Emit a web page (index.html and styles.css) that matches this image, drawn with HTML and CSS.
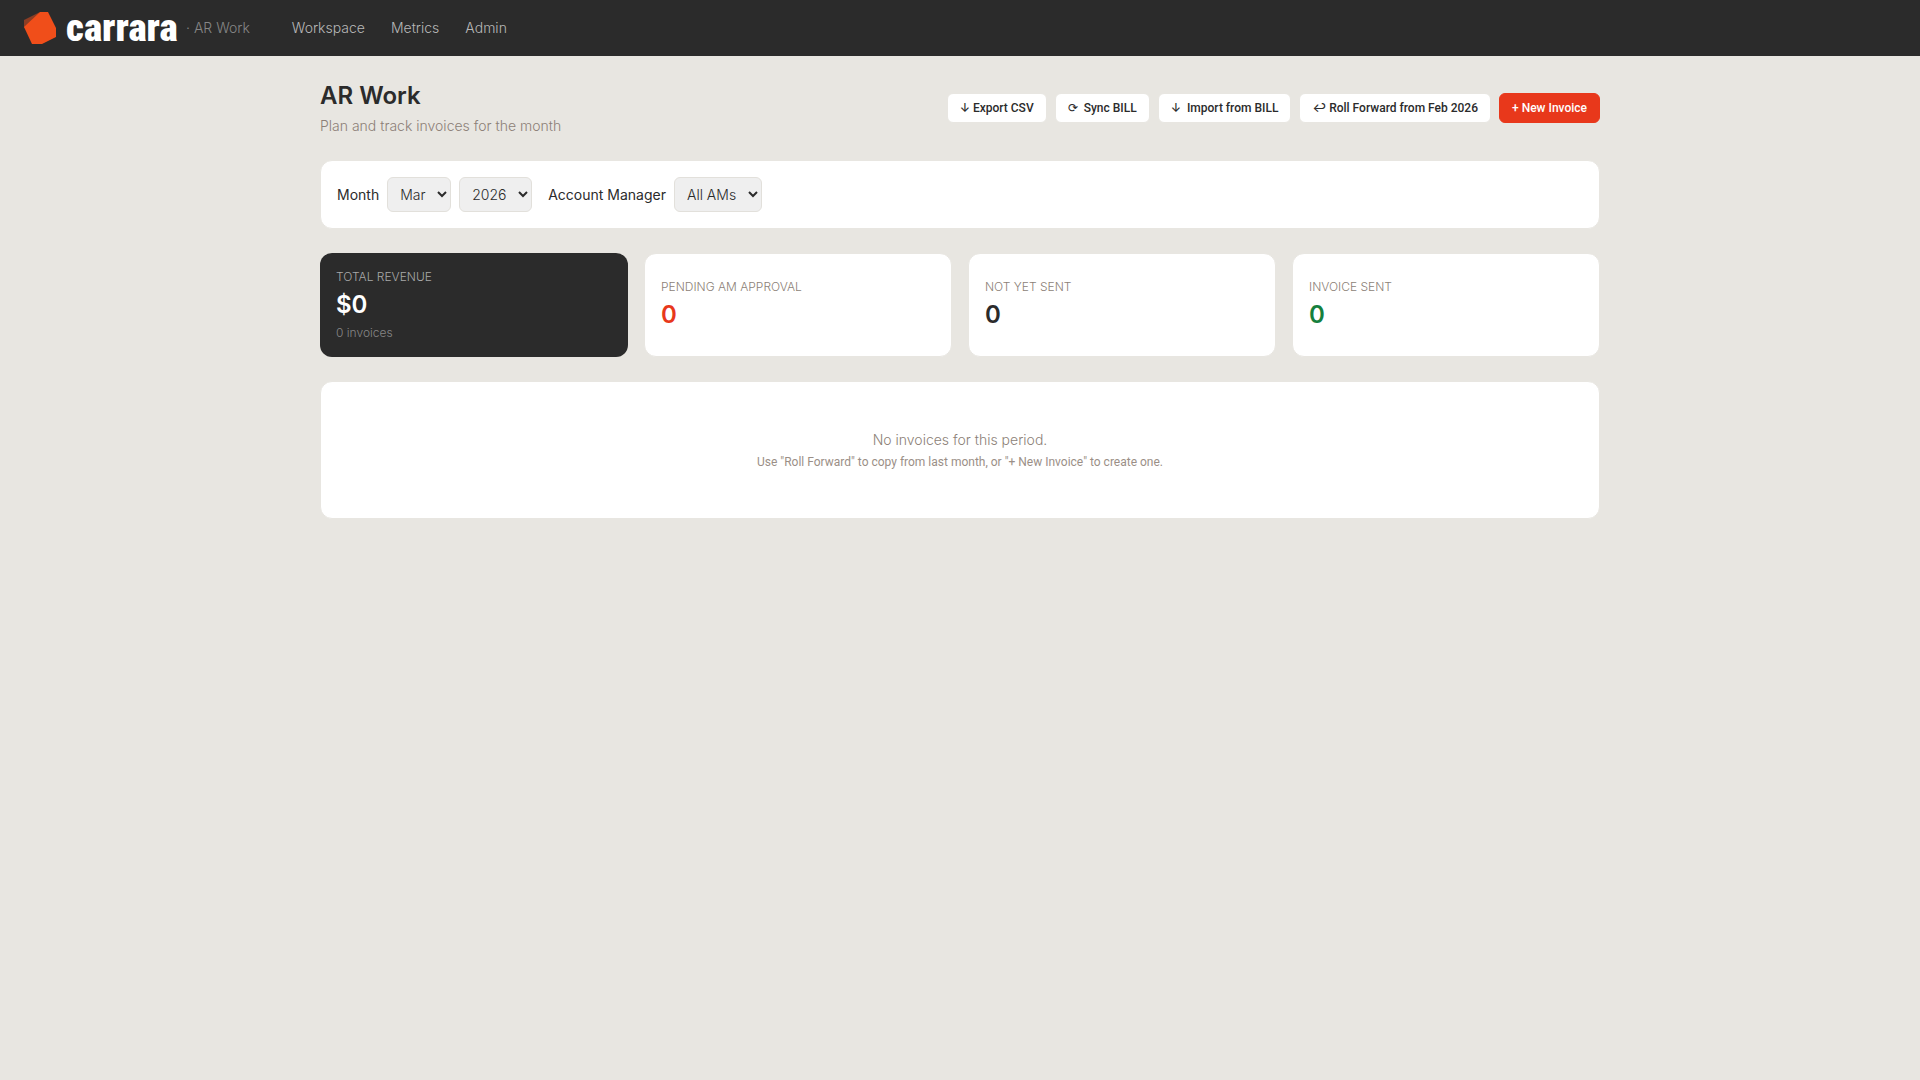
FILE: index.html
```html
<!DOCTYPE html>
<html lang="en">
<head>
<meta charset="utf-8">
<meta name="viewport" content="width=device-width, initial-scale=1">
<title>AR Work</title>
<link rel="stylesheet" href="styles.css">
</head>
<body>
<header class="topbar">
  <a class="brand" href="#">
    <svg class="brand-mark" viewBox="0 0 32 32" aria-hidden="true">
      <path fill="#8c3d24" d="M0 8 16 0 12 6 0 16z"/>
      <path fill="#f04e1a" d="M16 0h8l8 16v9L18 32H8L0 15z"/>
    </svg>
    <span class="brand-name">carrara</span>
  </a>
  <span class="section-name">· AR Work</span>
  <nav class="nav">
    <a href="#">Workspace</a>
    <a href="#">Metrics</a>
    <a href="#">Admin</a>
  </nav>
</header>
<main class="page">
  <div class="page-head">
    <div>
      <h1 class="title">AR Work</h1>
      <p class="subtitle">Plan and track invoices for the month</p>
    </div>
    <div class="actions">
      <button class="btn" type="button">↓ Export CSV</button>
      <button class="btn" type="button"><span>⟳</span><span>Sync BILL</span></button>
      <button class="btn" type="button"><span>↓</span><span>Import from BILL</span></button>
      <button class="btn" type="button">↩ Roll Forward from Feb 2026</button>
      <button class="btn btn-primary" type="button">+ New Invoice</button>
    </div>
  </div>
  <form class="card filters">
    <div class="field">
      <label for="month">Month</label>
      <select id="month"><option>Mar</option></select>
      <select id="year" aria-label="Year"><option>2026</option></select>
    </div>
    <div class="field">
      <label for="manager">Account Manager</label>
      <select id="manager"><option>All AMs</option></select>
    </div>
  </form>
  <section class="stats">
    <div class="stat stat-dark">
      <div class="stat-label">TOTAL REVENUE</div>
      <div class="stat-value">$0</div>
      <div class="stat-note">0 invoices</div>
    </div>
    <button class="card stat" type="button">
      <span class="stat-label">PENDING AM APPROVAL</span>
      <span class="stat-value red">0</span>
    </button>
    <button class="card stat" type="button">
      <span class="stat-label">NOT YET SENT</span>
      <span class="stat-value">0</span>
    </button>
    <button class="card stat" type="button">
      <span class="stat-label">INVOICE SENT</span>
      <span class="stat-value green">0</span>
    </button>
  </section>
  <section class="card empty">
    <p class="empty-title">No invoices for this period.</p>
    <p class="empty-hint">Use "Roll Forward" to copy from last month, or "+ New Invoice" to create one.</p>
  </section>
</main>
</body>
</html>
```
FILE: styles.css
```css
* { box-sizing: border-box; }
body {
  margin: 0;
  background: #e8e6e1;
  color: #2b2b2b;
  font: 300 14px/20px Inter, "Liberation Sans", sans-serif;
}
h1, p { margin: 0; }
button, select { font: inherit; color: inherit; }
a { color: inherit; text-decoration: none; }

.topbar {
  display: flex;
  align-items: center;
  height: 56px;
  padding: 0 24px;
  background: #2b2b2b;
}
.brand { display: flex; align-items: center; gap: 10px; color: #fff; }
.brand-mark { width: 32px; height: 32px; }
.brand-name {
  min-width: 112px;
  font: 900 39px/44px "Liberation Sans Narrow", "Roboto Condensed", Roboto, sans-serif;
}
.section-name { margin-left: 8px; color: #868686; }
.nav { display: flex; gap: 26px; margin-left: 42px; color: #b8b8b8; }

.page {
  display: flex;
  flex-direction: column;
  gap: 24px;
  max-width: 1328px;
  margin: 0 auto;
  padding: 24px;
}
.page-head { display: flex; justify-content: space-between; align-items: center; }
.title { font-size: 24px; line-height: 32px; font-weight: 600; }
.subtitle { margin-top: 4px; color: #8c7f77; }
.actions { display: flex; gap: 8px; }
.btn {
  display: flex;
  gap: 6px;
  padding: 6px 12px;
  border: 1px solid #e8e6e1;
  border-radius: 6px;
  background: #fff;
  font-family: Roboto, Inter, sans-serif;
  font-size: 12px;
  line-height: 16px;
  font-weight: 500;
}
.btn-primary { background: #e8381b; border-color: #e8381b; color: #fff; }

.card { border: 1px solid #e8e6e1; border-radius: 12px; background: #fff; }
.filters { display: flex; gap: 16px; padding: 16px; }
.field { display: flex; align-items: center; gap: 8px; }
.field label { font-weight: 400; }
.field select {
  height: 35px;
  padding: 0 8px;
  border: 1px solid #e2e0db;
  border-radius: 6px;
  background: #efefef;
}

.stats { display: grid; grid-template-columns: repeat(4, 1fr); gap: 16px; }
.stat {
  display: flex;
  flex-direction: column;
  justify-content: center;
  gap: 4px;
  padding: 16px;
  text-align: left;
}
.stat-label { color: #8c7f77; font-size: 12px; line-height: 16px; }
.stat-value { font-size: 24px; line-height: 32px; font-weight: 600; }
.stat-note { color: #868686; font-size: 12px; line-height: 16px; }
.stat-dark { border-radius: 12px; background: #2b2b2b; color: #fff; }
.stat-dark .stat-label { color: #a8a8a8; }
.red { color: #e8381b; }
.green { color: #15803d; }

.empty { padding: 48px 16px; text-align: center; color: #8c7f77; }
.empty-hint {
  margin-top: 4px;
  color: #9b8f87;
  font-family: Roboto, Inter, sans-serif;
  font-size: 12px;
  line-height: 16px;
  font-weight: 400;
}
```
